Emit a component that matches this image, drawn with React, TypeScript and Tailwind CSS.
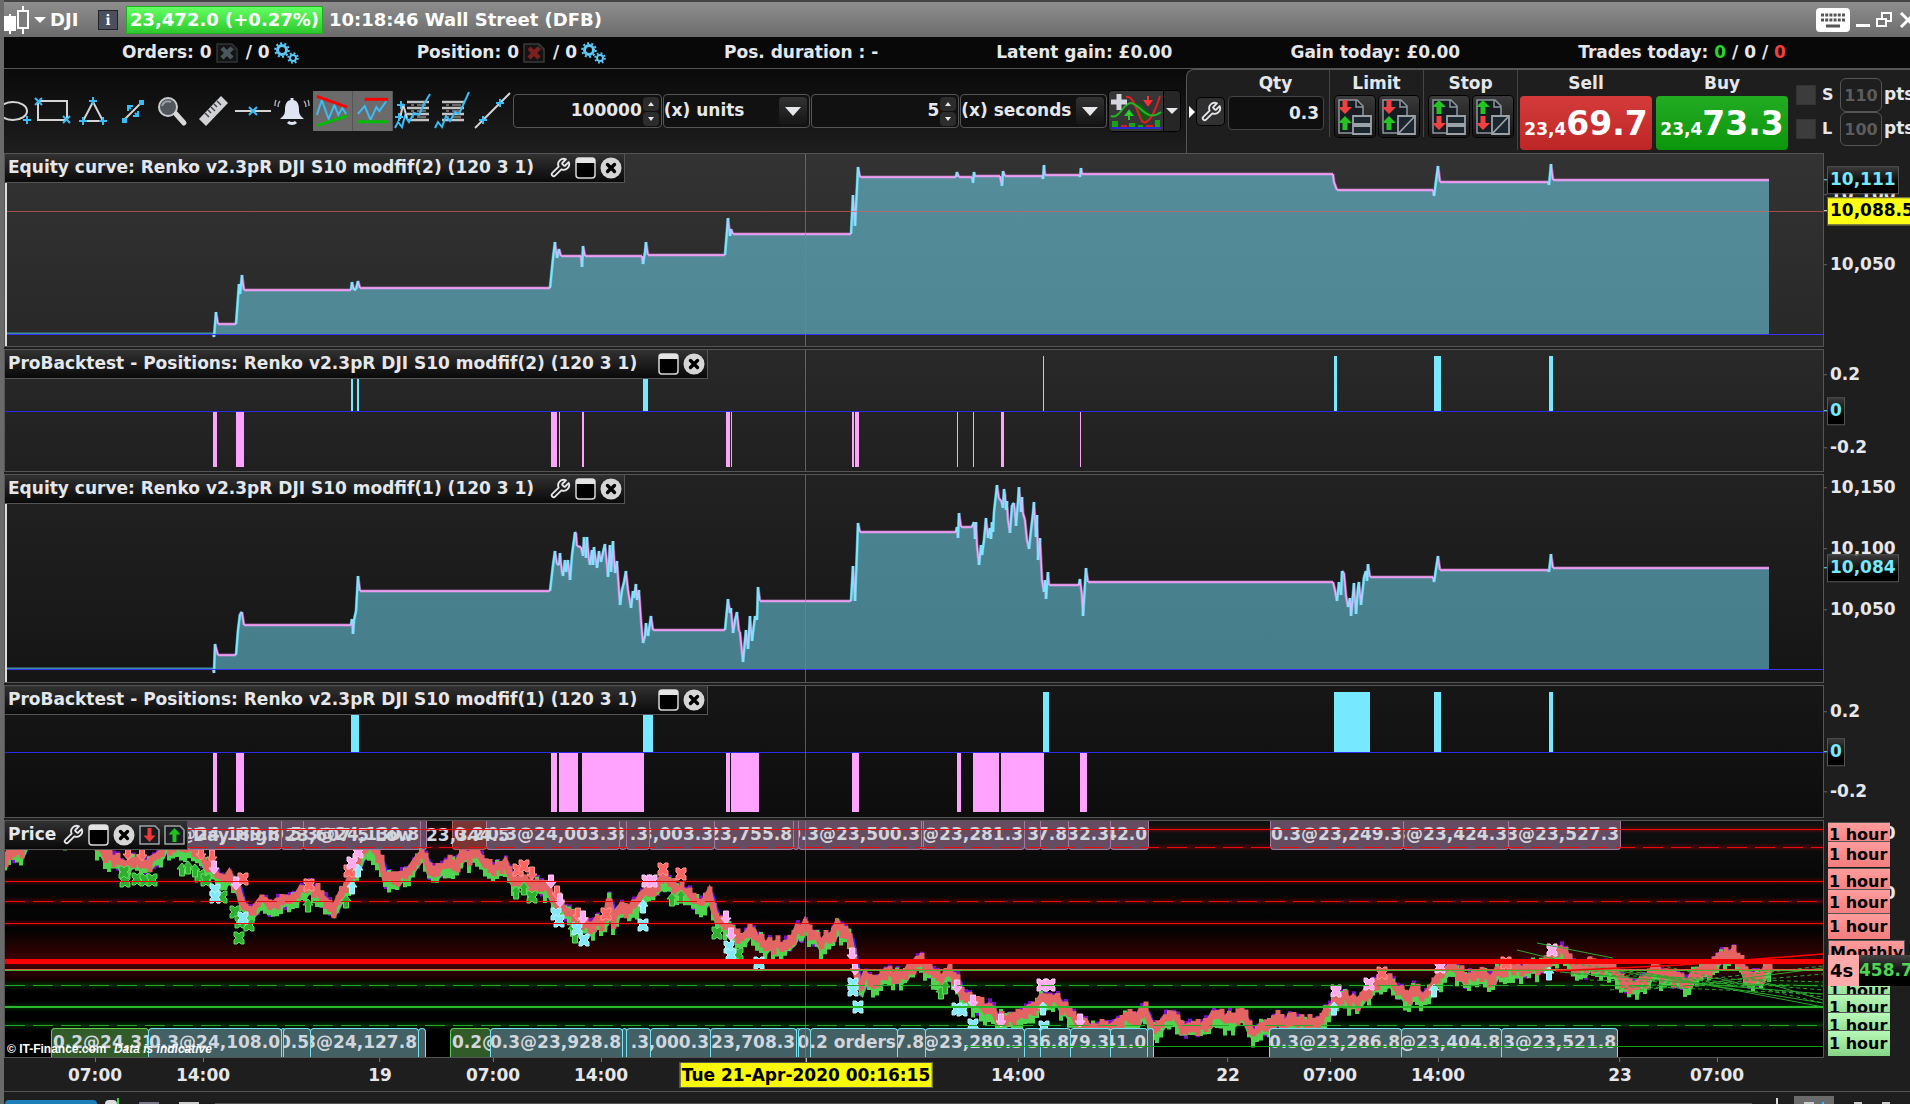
import React, { useState } from 'react';
import { LuWrench } from 'react-icons/lu';

type Pt = [number, number];

const CYAN = '#76e8ff';
const PINK = '#ffa3ff';
const X0 = 5;
const PLOT_W = 1818;

// "x,y x,y ..." -> points
const pts = (s: string): Pt[] => s.trim().split(/\s+/).map((p) => p.split(',').map(Number) as Pt);

const equity2 = pts(`5,334 213,334 214,337 216,312 218,324 236,324 239,284 240,294 242,275 244,290 351,290 352,282 354,290
356,289 358,281 360,288 550,288 553,258 555,242 557,258 559,249 561,256 581,256 582,267 583,246 585,256 642,256 643,264
645,252 646,242 648,255 725,255 728,218 730,236 731,229 733,234 851,234 853,195 855,226 858,167 860,177 956,177 957,172
959,177 972,177 973,183 974,172 975,176 1000,176 1002,186 1003,171 1005,176 1042,176 1043,179 1044,165 1045,175 1079,175
1080,177 1081,168 1082,174 1333,174 1334,182 1337,190 1433,190 1434,196 1438,166 1440,182 1548,182 1549,185 1551,164
1553,180 1769,180`);

const equity1 = pts(`5,669 213,669 214,673 215,644 218,655 236,655 238,630 240,614 242,612 244,625 351,625 352,619 353,634
354,620 356,611 358,576 360,591 550,591 553,565 555,551 557,564 559,565 560,553 562,572 563,576 565,560 566,572 568,560
570,580 572,555 574,540 575,532 576,533 577,546 581,547 583,556 584,537 586,558 587,537 589,560 590,565 592,550 593,565
594,547 597,568 599,551 601,562 603,552 605,544 607,565 608,577 610,545 611,572 613,541 615,573 617,561 619,590 620,605
622,590 624,582 626,571 628,590 631,608 633,591 634,598 636,584 637,600 639,590 641,620 643,643 645,636 646,623 648,636
651,616 653,630 725,630 728,599 730,613 731,608 733,633 735,620 737,612 739,631 740,632 743,662 745,640 746,630 748,649
750,616 752,641 755,616 757,620 758,587 760,601 851,601 853,566 855,601 857,550 858,523 860,532 956,532 957,527 958,538
959,513 961,527 972,527 974,522 975,539 976,522 977,545 979,565 981,545 982,555 984,540 986,518 988,538 990,528 991,539
992,522 993,532 994,512 997,485 999,499 1001,500 1003,508 1004,489 1005,494 1006,510 1007,501 1008,520 1010,533 1012,505
1014,503 1015,512 1016,526 1018,501 1019,487 1021,512 1022,497 1023,513 1025,520 1027,540 1029,549 1031,530 1033,513
1034,502 1036,537 1037,515 1038,560 1040,538 1042,580 1044,592 1045,580 1046,599 1048,572 1049,585 1079,585 1080,579
1082,595 1083,616 1086,568 1088,582 1333,582 1335,590 1337,601 1339,582 1341,595 1342,571 1344,573 1346,595 1348,607
1350,598 1351,616 1353,594 1354,583 1356,614 1358,587 1359,582 1361,605 1364,577 1366,571 1367,581 1368,564 1370,577
1433,577 1434,582 1438,556 1440,570 1548,570 1549,572 1551,554 1553,568 1769,568`);

// [from, to] spans along x
const long2: Pt[] = [[351, 353], [357, 359], [643, 648], [1043, 1044], [1334, 1337], [1434, 1441], [1549, 1553]];
const short2: Pt[] = [[213, 217], [236, 244], [551, 557], [559, 560], [582, 584], [726, 730], [731, 732], [852, 854], [855, 859], [957, 958], [973, 974], [1001, 1004], [1080, 1081]];
const long1: Pt[] = [[351, 359], [643, 653], [1043, 1049], [1334, 1370], [1434, 1441], [1549, 1553]];
const short1: Pt[] = [[213, 217], [236, 244], [551, 557], [559, 578], [582, 644], [726, 730], [731, 759], [852, 859], [957, 961], [973, 999], [1001, 1044], [1080, 1087]];

const price = pts(`5,864 12,850 20,852 25,842 30,835 90,835 100,850 108,860 118,862 125,868 135,862 145,866 155,858 165,848
175,845 185,850 195,853 205,862 212,870 220,880 228,878 236,882 240,900 246,908 252,912 262,902 270,908 280,904 290,902
300,893 310,887 318,897 326,902 332,910 340,895 350,880 360,858 370,848 378,855 385,880 395,882 405,876 415,862 420,850
428,868 436,874 445,866 455,862 465,857 475,853 485,864 495,870 505,866 512,880 520,878 530,886 540,884 548,886 555,905
565,910 575,915 585,928 595,924 605,922 609,900 612,925 620,910 628,910 636,905 645,890 655,893 660,882 668,882 676,893
684,892 690,897 700,905 708,895 714,910 720,925 730,930 738,938 745,935 752,930 758,940 765,945 775,945 785,947 790,945
797,932 805,928 815,938 822,945 830,935 838,927 845,935 852,945 856,975 858,990 865,978 875,983 885,976 895,978 905,975
912,966 922,962 930,972 940,978 948,975 955,978 960,992 970,998 980,1008 990,1012 998,1020 1010,1022 1020,1020 1030,1008
1035,1005 1045,998 1055,1000 1065,1010 1075,1022 1090,1028 1105,1028 1115,1025 1125,1018 1135,1020 1145,1010 1150,1025
1160,1030 1170,1015 1180,1025 1190,1028 1200,1030 1210,1020 1215,1014 1225,1020 1235,1018 1242,1012 1250,1035 1260,1030
1270,1022 1280,1021 1295,1022 1310,1022 1322,1024 1328,1010 1335,1003 1345,998 1355,1003 1362,1000 1370,990 1380,980
1390,985 1400,993 1408,998 1415,990 1425,998 1435,985 1440,975 1450,968 1460,976 1470,980 1480,976 1490,982 1500,970
1508,972 1520,972 1530,968 1540,965 1548,960 1555,953 1568,955 1575,968 1585,970 1595,965 1605,967 1615,975 1625,985
1633,988 1645,982 1655,968 1665,978 1680,985 1690,980 1700,970 1715,965 1722,955 1730,953 1740,962 1748,978 1758,980
1765,973 1769,968`);

const noise = (n: number) => {
  const v = Math.sin(n * 12.9898) * 43758.5453;
  return v - Math.floor(v);
};

// resample the price every 4px, with some wobble
const ticks: Pt[] = [];
for (let x = 5, i = 0, n = 0; x <= 1769; x += 4, n++) {
  while (i < price.length - 2 && price[i + 1][0] < x) i++;
  const [ax, ay] = price[i];
  const [bx, by] = price[i + 1];
  ticks.push([x, ay + ((by - ay) * (x - ax)) / (bx - ax) + (noise(n * 3.1) - 0.5) * 7]);
}

const barsPath = (seed: number, top: number, bottom: number, spread: number, dx = 0) =>
  ticks
    .map(([x, y], i) => {
      const a = y + top - noise(i + seed) * spread;
      const b = y + bottom + noise(i * 1.7 + seed) * spread;
      return `M${x + dx} ${a.toFixed(1)}V${b.toFixed(1)}`;
    })
    .join('');

const linePath = (dy: number, dx = 0) =>
  'M' + ticks.map(([x, y]) => `${x + dx} ${(y + dy).toFixed(1)}`).join('L');

type Marker = { kind: 'x' | 'up' | 'down'; fill: string; edge: string; at: Pt[] };
const GREEN_M = '#2fae2f';
const RED_M = '#ff6464';
const markers: Marker[] = [
  { kind: 'x', fill: GREEN_M, edge: '#5fe05f', at: pts('125,881 137,879 145,880 152,880 124,872 200,876 206,880 222,897 235,912 240,922 249,925 239,938 532,897 717,933 738,954') },
  { kind: 'up', fill: GREEN_M, edge: '#5fe05f', at: pts('182,870 188,868 195,871 308,906 346,902 516,893 524,889 573,930 575,937 672,900 681,897 941,993 945,988') },
  { kind: 'x', fill: RED_M, edge: '#ff9a8a', at: pts('309,885 243,879 349,871 518,870 524,866 606,914 663,869 681,874 1382,973 1506,963') },
  { kind: 'down', fill: RED_M, edge: '#ff9a8a', at: pts('128,853 142,854 201,853 212,856 532,873 557,892 578,914') },
  { kind: 'x', fill: '#86e8f7', edge: '#b8f4ff', at: pts('215,890 215,897 243,918 556,914 559,921 577,929 584,940 643,925 729,947 731,955 759,963 853,984 853,990 858,1007 957,1009 962,1010 973,1025 1044,1027') },
  { kind: 'up', fill: '#86f0ff', edge: '#b8f4ff', at: pts('352,888 358,871 643,907 1043,1009 1334,1009 1434,991 1549,974') },
  { kind: 'down', fill: '#ffa8f4', edge: '#ffd0fa', at: pts('214,867 236,883 551,881 560,900 583,917 726,917 731,934 852,954 855,968 957,986 973,1001 1001,1020 1080,1020') },
  { kind: 'x', fill: '#ffabec', edge: '#ffd0fa', at: pts('352,863 358,852 647,881 652,881 1042,985 1050,985 1336,991 1369,984 1440,967 1552,950') },
];

type Tag = { from: number; to: number; text?: string; tone: 'sell' | 'buy' | 'green' | 'red' };
const sell = (from: number, to: number, text?: string): Tag => ({ from, to, text, tone: 'sell' });
const buy = (from: number, to: number, text?: string): Tag => ({ from, to, text, tone: 'buy' });

const topTags: Tag[] = [
  sell(187, 281, '@24,189.8'), sell(281, 303, '0.5'), sell(303, 420, '3@24,130.8'), sell(420, 426),
  { from: 452, to: 486, text: '0.2@24', tone: 'red' },
  sell(486, 619, '0.3@24,003.3'), sell(619, 626, '3'), sell(626, 649, '.3'), sell(649, 714, '23,003.3'),
  sell(714, 793, '23,755.8'), sell(793, 798), sell(798, 921, '0.3@23,500.3'), sell(921, 923),
  sell(923, 1024, '0.3@23,281.3'), sell(1024, 1040, '3'), sell(1040, 1068, '7.8'), sell(1068, 1110, '32.3'),
  sell(1110, 1148, '42.0'), sell(1270, 1403, '0.3@23,249.3'), sell(1403, 1508, '0.3@23,424.3'), sell(1508, 1620, '0.3@23,527.3'),
];

const bottomTags: Tag[] = [
  { from: 51, to: 148, text: '0.2@24,310', tone: 'green' },
  buy(148, 281, '0.3@24,108.0'), buy(281, 283), buy(283, 310, '0.5'), buy(310, 418, '3@24,127.8'), buy(418, 425),
  { from: 450, to: 490, text: '0.2@24', tone: 'green' },
  buy(490, 622, '0.3@23,928.8'), buy(622, 626), buy(626, 650, '.3'), buy(650, 710, '24,000.3'), buy(710, 796, '23,708.3'),
  buy(796, 798), buy(798, 810, '0'), buy(810, 897, '0.2 orders'), buy(897, 925, '7.8'), buy(925, 1024, '@23,280.3'),
  buy(1024, 1040, '3'), buy(1040, 1070, '6.8'), buy(1070, 1110, '79.3'), buy(1110, 1147, '41.0'), buy(1147, 1153),
  buy(1269, 1401, '0.3@23,286.8'), buy(1401, 1501, '@23,404.8'), buy(1501, 1617, '3@23,521.8'),
];

const toneClass = {
  sell: 'justify-end border-[#a97aa0] bg-[#664c60] rounded-b-sm border-x border-b',
  red: 'justify-start border-[#c06060] bg-[#7a3434] rounded-b-sm border-x border-b',
  buy: 'justify-end border-[#74e4f5] bg-[#436064] rounded-t-sm border-x border-t',
  green: 'justify-start border-[#5fd04f] bg-[#315c2a] rounded-t-sm border-x border-t',
};

const timeLabels: [number, string][] = [
  [95, '07:00'], [203, '14:00'], [380, '19'], [493, '07:00'], [601, '14:00'], [1018, '14:00'],
  [1228, '22'], [1330, '07:00'], [1438, '14:00'], [1620, '23'], [1717, '07:00'],
];

const left = (x: number) => `${((x - X0) / PLOT_W) * 100}%`;

/* ---------- small icons ---------- */

const CrossDot = ({ x, y }: { x: number; y: number }) => (
  <path d={`M${x - 4} ${y}h8M${x} ${y - 4}v8`} stroke="#38bdf8" strokeWidth="2" />
);

function Gears() {
  return (
    <svg width="25" height="22" viewBox="0 0 25 22" fill="none" stroke="#5cc8f5">
      <circle cx="8" cy="8" r="4.5" strokeWidth="3" />
      <circle cx="8" cy="8" r="6.8" strokeWidth="2" strokeDasharray="2.1 2.17" />
      <circle cx="19" cy="16" r="3" strokeWidth="2" />
      <circle cx="19" cy="16" r="4.8" strokeWidth="2" strokeDasharray="1.8 1.97" />
    </svg>
  );
}

function CancelDoc({ color, line }: { color: string; line: string }) {
  return (
    <svg width="22" height="20" viewBox="0 0 22 20" fill="none">
      <path d="M1 1h15l5 5v13H1z" fill="#141414" stroke={line} strokeWidth="1.5" />
      <path d="M16 1v5h5" stroke={line} />
      <path d="M6 5l10 10M16 5L6 15" stroke={color} strokeWidth="4.5" />
    </svg>
  );
}

function WindowIcon() {
  return (
    <svg width="21" height="22" viewBox="0 0 21 22">
      <rect x="1" y="1" width="19" height="20" rx="3" fill="#000" stroke="#d8d8d8" strokeWidth="1.5" />
      <path d="M1 6V4a3 3 0 0 1 3-3h13a3 3 0 0 1 3 3v2z" fill="#e4e4e4" />
    </svg>
  );
}

function CloseIcon() {
  return (
    <svg width="22" height="22" viewBox="0 0 22 22">
      <circle cx="11" cy="11" r="10.5" fill="#d6d6d6" />
      <path d="M7.5 7.5l7 7M14.5 7.5l-7 7" stroke="#000" strokeWidth="3.4" strokeLinecap="round" />
    </svg>
  );
}

function DocArrow({ up }: { up?: boolean }) {
  return (
    <svg width="21" height="20" viewBox="0 0 21 20" fill="none">
      <path d="M1 1h15l4 4v14H1z" fill="#181c20" stroke="#a0a4a8" strokeWidth="1.5" />
      {up ? (
        <path d="M10.5 3l6 6.500h-4V17h-4V9.500h-4z" fill="#1fc41f" />
      ) : (
        <path d="M10.500 17l6-6.500h-4V3h-4v7.500h-4z" fill="#f03a3a" />
      )}
    </svg>
  );
}

function OrderIcon({ topUp, slash }: { topUp?: boolean; slash?: boolean }) {
  return (
    <svg width="37" height="38" viewBox="0 0 37 38" fill="none">
      <path d="M3 2h18l6 6v27H3z" fill="#161c22" stroke="#8f979e" strokeWidth="1.5" />
      <path d="M20 2v7h7" stroke="#8f979e" strokeWidth="1.5" />
      {topUp ? (
        <path d="M9 2l7 7h-4.500V16h-5V9H2z" fill="#22c322" />
      ) : (
        <path d="M9 16l7-7h-4.500V2h-5V9H2z" fill="#f04040" />
      )}
      {topUp ? (
        <path d="M9 32l7-7h-4.500V18h-5v7H2z" fill="#f04040" />
      ) : (
        <path d="M9 18l7 7h-4.500V32h-5v-7H2z" fill="#22c322" />
      )}
      {slash ? (
        <path d="M18 18h17v18H18zM18 36L35 18" fill="#1c262e" stroke="#9aa2a8" strokeWidth="1.8" />
      ) : (
        <path d="M17 18h18v8H17zM17 28h18v8H17z" fill="#1c262e" stroke="#9aa2a8" strokeWidth="1.8" />
      )}
    </svg>
  );
}

const drawTools: { label: string; active?: boolean; icon: React.ReactNode }[] = [
  {
    label: 'Rectangle',
    icon: (
      <>
        <rect x="5" y="10" width="29" height="19" stroke="#d4d4d4" strokeWidth="2" />
        <path d="M2 7l7 7M9 7l-7 7M30 25l7 7M37 25l-7 7" stroke="#38bdf8" strokeWidth="2" />
      </>
    ),
  },
  {
    label: 'Triangle',
    icon: (
      <>
        <path d="M20 11L10 30h20z" stroke="#d4d4d4" strokeWidth="2" />
        <CrossDot x={20} y={10} />
        <CrossDot x={10} y={30} />
        <CrossDot x={30} y={30} />
      </>
    ),
  },
  {
    label: 'Segment',
    icon: (
      <>
        <path d="M12 28L28 12" stroke="#d4d4d4" strokeWidth="2" />
        <path d="M9 27h5v5h-5zM26 9h5v5h-5z" fill="#38bdf8" />
        <path d="M15 20v-5h5M25 20v5h-5M15 15l3 3M25 25l-3-3" stroke="#38bdf8" strokeWidth="2" />
      </>
    ),
  },
  {
    label: 'Zoom',
    icon: (
      <>
        <circle cx="15" cy="16" r="9" fill="#50565c" stroke="#c9cdd1" strokeWidth="2" />
        <path d="M9 15c1-4 5-6 9-4" stroke="#9aa0a6" strokeWidth="2" />
        <path d="M23 23l8 9" stroke="#d8d8d8" strokeWidth="5" strokeLinecap="round" />
      </>
    ),
  },
  {
    label: 'Ruler',
    icon: (
      <>
        <path d="M28 5l7 7L13 35l-7-7z" fill="#d0d2d6" />
        <path d="M12 22l4 4M15 19l3 3M18 16l4 4M21 13l3 3M24 10l4 4" stroke="#44484c" strokeWidth="1.500" />
      </>
    ),
  },
  {
    label: 'Horizontal line',
    icon: (
      <>
        <path d="M2 20h36" stroke="#d4d4d4" strokeWidth="2" />
        <path d="M16 16l8 8M24 16l-8 8" stroke="#38bdf8" strokeWidth="2" />
      </>
    ),
  },
  {
    label: 'Alert',
    icon: (
      <>
        <path d="M19 9c-6 0-7 5-7 10 0 5-2 6-5 9h24c-3-3-5-4-5-9 0-5-1-10-7-10z" fill="#dfe5f2" />
        <path d="M19 7v3M15 31c2 2 6 2 8 0" stroke="#dfe5f2" strokeWidth="3" />
        <path d="M7 10c-2 2-2 4-2 6M3 9c-1 2-1 4-1 6M31 10c2 2 2 4 2 6M35 9c1 2 1 4 1 6" stroke="#a8adb8" strokeWidth="1.500" />
      </>
    ),
  },
  {
    label: 'Channel detection',
    active: true,
    icon: (
      <>
        <path d="M4 24l5-15 7 19 6-14 4 10 4-7 4 6" stroke="#38bdf8" strokeWidth="2" />
        <path d="M4 5l31 11" stroke="#f00" strokeWidth="3" />
        <path d="M4 35l31-10" stroke="#0b0" strokeWidth="3" />
      </>
    ),
  },
  {
    label: 'Support and resistance',
    active: true,
    icon: (
      <>
        <path d="M5 23l7-8 6 14 6-13 3 4 7-10" stroke="#38bdf8" strokeWidth="2" />
        <path d="M12 8h24" stroke="#f00" strokeWidth="3" />
        <path d="M4 31h32" stroke="#0b0" strokeWidth="3" />
      </>
    ),
  },
  {
    label: 'Pattern list',
    icon: (
      <>
        <path d="M14 11h22M14 17h22M14 23h22M14 29h22" stroke="#c4c4c4" strokeWidth="2.500" />
        <path d="M18 14h3M24 14h9M18 20h3M24 20h9M18 26h3M24 26h9" stroke="#888" strokeWidth="1.500" />
        <path d="M2 37l3-6 4 5 3-11 4 6 5-9 5 2 5-11 6-10" stroke="#38bdf8" strokeWidth="2" />
        <path d="M7 28l3-15 4 14" stroke="#d4d4d4" strokeWidth="2" />
        <CrossDot x={8} y={14} />
        <CrossDot x={6} y={26} />
      </>
    ),
  },
  {
    label: 'Order list',
    icon: (
      <>
        <path d="M9 11h22M9 17h22M9 23h22M9 29h22" stroke="#c4c4c4" strokeWidth="2.500" />
        <path d="M13 14h3M19 14h9M13 20h3M19 20h9M13 26h3M19 26h9" stroke="#888" strokeWidth="1.500" />
        <path d="M2 37l3-6 4 5 4-11 4 5 5-9 4 2 5-11 5-11" stroke="#38bdf8" strokeWidth="2" />
      </>
    ),
  },
  {
    label: 'Trend line',
    icon: (
      <>
        <path d="M2 37L37 2" stroke="#d4d4d4" strokeWidth="2" />
        <CrossDot x={10} y={29} />
        <CrossDot x={27} y={12} />
      </>
    ),
  },
];

/* ---------- header bars ---------- */

function TitleBar() {
  return (
    <header className="flex h-[37px] shrink-0 items-center border-t-2 border-[#444] bg-linear-to-b from-[#8e8e8e] to-[#6c6c6c] text-[18px] text-white">
      <svg width="26" height="28" viewBox="0 0 26 28" fill="none" stroke="#fff" strokeWidth="2">
        <path d="M6 8v20M19 0v28" />
        <rect x="1" y="11" width="10" height="13" fill="#fff" />
        <rect x="14" y="5" width="10" height="17" fill="#7c7c7c" />
      </svg>
      <span className="ml-1 h-0 w-0 border-x-6 border-t-6 border-x-transparent border-t-white" />
      <h1 className="ml-1 w-12">DJI</h1>
      <button aria-label="Info" className="flex h-5 w-5 items-center justify-center border border-[#222] bg-[#4c4f5c] font-serif text-base">
        i
      </button>
      <span className="ml-2 flex h-7 w-[197px] items-center justify-center border border-[#1fae1f] bg-linear-to-b from-[#62ff62] to-[#2cc92c]">
        23,472.0 (+0.27%)
      </span>
      <span className="ml-1.5">10:18:46 Wall Street (DFB)</span>
      <div className="-mr-2 ml-auto flex shrink-0 items-center gap-1.5">
        <button aria-label="Keyboard">
          <svg width="34" height="24" viewBox="0 0 34 24">
            <rect width="34" height="24" rx="4" fill="#fff" />
            <path d="M5 7h24M5 12h24" stroke="#555" strokeWidth="3" strokeDasharray="3 1.200" />
            <path d="M10 18h14" stroke="#555" strokeWidth="3" />
          </svg>
        </button>
        <button aria-label="Minimize" className="mt-3 h-[3px] w-3.5 bg-white" />
        <button aria-label="Restore">
          <svg width="16" height="16" viewBox="0 0 16 16" fill="#777" stroke="#fff" strokeWidth="2">
            <rect x="6" y="1" width="9" height="8" />
            <rect x="1" y="7" width="9" height="7" />
          </svg>
        </button>
        <button aria-label="Close">
          <svg width="20" height="16" viewBox="0 0 20 16" stroke="#fff" strokeWidth="3">
            <path d="M3 1l14 14M17 1L3 15" />
          </svg>
        </button>
      </div>
    </header>
  );
}

function InfoBar() {
  return (
    <div className="flex h-8 shrink-0 items-center justify-evenly border-b border-[#555] bg-[#080808] pt-px pr-1.5 whitespace-nowrap">
      <div className="flex items-center gap-1">
        Orders: 0 <CancelDoc color="#4c565e" line="#2c343a" /> <span className="ml-1">/ 0</span> <Gears />
      </div>
      <div className="flex items-center gap-1">
        Position: 0 <CancelDoc color="#7c2020" line="#3a3a3a" /> <span className="ml-1">/ 0</span> <Gears />
      </div>
      <div>Pos. duration : -</div>
      <div>Latent gain: £0.00</div>
      <div>Gain today: £0.00</div>
      <div>
        Trades today: <span className="text-[#2bd32b]">0</span> / 0 / <span className="text-[#f24040]">0</span>
      </div>
    </div>
  );
}

function Stepper({ label, value, onChange }: { label: string; value: number; onChange: (v: number) => void }) {
  return (
    <div className="flex h-[34px] flex-1 items-center rounded border border-[#555] bg-[#111] pr-0.5">
      <input
        aria-label={label}
        className="w-0 flex-1 bg-transparent pr-px text-right outline-none"
        value={value}
        onChange={(e) => onChange(Number(e.target.value) || 0)}
      />
      <div className="flex flex-col gap-px">
        <button aria-label={`${label} up`} onClick={() => onChange(value + 1)} className="flex h-3.5 w-4 items-center justify-center rounded-sm bg-[#2c2c2c]">
          <span className="border-x-3 border-b-4 border-x-transparent border-b-gray-200" />
        </button>
        <button aria-label={`${label} down`} onClick={() => onChange(value - 1)} className="flex h-3.5 w-4 items-center justify-center rounded-sm bg-[#2c2c2c]">
          <span className="border-x-3 border-t-4 border-x-transparent border-t-gray-200" />
        </button>
      </div>
    </div>
  );
}

function Picker({ label, options }: { label: string; options: string[] }) {
  return (
    <div className="relative h-[34px] flex-1 rounded border border-[#555] bg-[#111]">
      <select aria-label={label} className="h-full w-full appearance-none bg-transparent outline-none">
        {options.map((o) => (
          <option key={o}>{o}</option>
        ))}
      </select>
      <span className="pointer-events-none absolute top-0.5 right-0.5 flex h-7 w-7 items-center justify-center rounded bg-linear-to-b from-[#333] to-[#151515]">
        <span className="border-x-8 border-t-9 border-x-transparent border-t-gray-200" />
      </span>
    </div>
  );
}

function OrderGroup({ title, stop }: { title: string; stop?: boolean }) {
  return (
    <div className="flex w-[94px] shrink-0 flex-col items-center border-l border-[#444]">
      <span className="leading-[26px]">{title}</span>
      <div className="flex gap-1">
        {[false, true].map((slash) => (
          <button key={String(slash)} aria-label={`${title} ${slash ? 'custom' : 'order'}`} className="flex h-[41px] w-10 items-center justify-center rounded bg-linear-to-b from-[#3a3a3a] to-[#161616] ring-1 ring-black">
            <OrderIcon topUp={stop} slash={slash} />
          </button>
        ))}
      </div>
    </div>
  );
}

function DealButton({ side, big, className }: { side: string; big: string; className: string }) {
  return (
    <div className="flex w-[132px] shrink-0 flex-col items-center">
      <span className="leading-[26px]">{side}</span>
      <button aria-label={`${side} at 23,4${big}`} className={`flex h-[54px] w-full items-baseline justify-center rounded pt-2 text-white ${className}`}>
        <span>23,4</span>
        <span className="text-[33px] leading-10">{big}</span>
      </button>
    </div>
  );
}

function RiskRow({ id, value }: { id: string; value: string }) {
  return (
    <div className="flex h-[34px] items-center gap-1.5">
      <input type="checkbox" aria-label={`Enable ${id}`} className="h-5 w-5 appearance-none border border-[#333] bg-[#3c3c3c]" />
      <label htmlFor={`risk-${id}`} className="w-3 text-base">{id}</label>
      <input id={`risk-${id}`} defaultValue={value} className="h-full w-[42px] rounded-md border border-[#555] bg-transparent text-center text-base text-[#5c5c5c] outline-none" />
      <span className="-ml-1">pts</span>
    </div>
  );
}

function Toolbar() {
  const [units, setUnits] = useState(100000);
  const [period, setPeriod] = useState(5);

  return (
    <div className="flex h-[84px] shrink-0 overflow-hidden bg-linear-to-b from-[#0a0a0a] to-[#1e1e1e]">
      <div className="flex min-w-0 flex-1 items-center">
        <button aria-label="Ellipse" className="w-[29px] shrink-0">
          <svg width="29" height="40" viewBox="0 0 29 40" fill="none">
            <ellipse cx="9" cy="20" rx="14" ry="9" stroke="#d4d4d4" strokeWidth="2" />
            <CrossDot x={23} y={29} />
          </svg>
        </button>
        {drawTools.map((t) => (
          <button key={t.label} aria-label={t.label} className={`h-10 w-10 shrink-0 ${t.active ? 'border-r border-[#555] bg-[#6b6b6b]' : ''}`}>
            <svg viewBox="0 0 40 40" className="h-full w-full" fill="none">
              {t.icon}
            </svg>
          </button>
        ))}
        <div className="flex min-w-0 flex-1 gap-px">
          <Stepper label="Unit count" value={units} onChange={setUnits} />
          <Picker label="Units" options={['(x) units', '(x) days']} />
          <Stepper label="Period" value={period} onChange={setPeriod} />
          <Picker label="Timeframe" options={['(x) seconds', '(x) minutes']} />
        </div>
        <div className="ml-0.5 flex h-10 shrink-0 overflow-hidden rounded bg-[#2a2a2a] ring-1 ring-black">
          <button aria-label="Indicators">
            <svg width="54" height="40" viewBox="0 0 54 40" fill="none">
              <rect width="54" height="40" fill="#363636" />
              <path d="M24 12l10 19 8-7-10-11z" fill="#0c5c0c" />
              <path d="M17 6c8-2 12 18 16 24 5 6 13-8 18-25" stroke="#e02020" strokeWidth="2" />
              <path d="M2 25c8 4 12-13 20-13 10 2 16 20 30 9" stroke="#22b422" strokeWidth="2" />
              <path d="M10 3v16M2 11h16" stroke="#d5d5e0" strokeWidth="5" />
              <path d="M39 5v7M36 10l3 4 3-4z" fill="#f33" stroke="#f33" strokeWidth="2" />
              <path d="M20 29v-6M17 24l3-4 3 4z" fill="#3f3" stroke="#2c2" strokeWidth="2" />
              <path d="M3 30h6v6H3zM20 32h6v5h-6zM29 34h5v3h-5zM46 29h5v8h-5z" fill="#18a018" />
              <path d="M12 34h6v3h-6zM37 34h7v3h-7z" fill="#d02020" />
              <path d="M3 37h49" stroke="#2a2ad0" strokeWidth="2" />
            </svg>
          </button>
          <button aria-label="More indicators" className="flex w-[17px] items-center justify-center border-l border-black bg-[#262626]">
            <span className="border-x-6 border-t-6 border-x-transparent border-t-gray-200" />
          </button>
        </div>
      </div>

      <div className="ml-1.5 flex w-[724px] shrink-0 items-start rounded-tl-lg border-t border-l border-[#555] bg-[#1e1e1e]">
        <span className="mt-9 ml-0.5 border-y-6 border-l-6 border-y-transparent border-l-white" />
        <button aria-label="Order settings" className="mt-7 ml-0.5 flex h-[27px] w-[27px] shrink-0 items-center justify-center rounded bg-[#303030] ring-1 ring-black">
          <LuWrench size={22} className="text-gray-200" />
        </button>
        <div className="ml-1 flex w-[101px] shrink-0 flex-col">
          <label htmlFor="qty" className="pr-1.5 text-center leading-[26px]">Qty</label>
          <input id="qty" defaultValue="0.3" className="h-[34px] w-[96px] rounded border border-[#444] bg-[#0f0f0f] pr-1 text-right outline-none" />
        </div>
        <OrderGroup title="Limit" />
        <OrderGroup title="Stop" stop />
        <div className="flex shrink-0 gap-1 border-l border-[#444] pl-0.5">
          <DealButton side="Sell" big="69.7" className="bg-linear-to-b from-[#d43a3a] to-[#be2626]" />
          <DealButton side="Buy" big="73.3" className="bg-linear-to-b from-[#22ac22] to-[#0a960a]" />
        </div>
        <div className="mt-2 ml-2 shrink-0">
          <RiskRow id="S" value="110" />
          <RiskRow id="L" value="100" />
        </div>
      </div>
    </div>
  );
}

/* ---------- chart panels ---------- */

type AxisLabel = { y: number; text: string; boxed?: boolean; cursor?: boolean };

type PanelProps = {
  top: number;
  height: number;
  title: string;
  bg: string;
  labels: AxisLabel[];
  wide: string;
  settings?: boolean;
  leftBar?: boolean;
  children: React.ReactNode;
};

function PanelHeader({ title, wide, settings, trade }: { title: string; wide: string; settings?: boolean; trade?: boolean }) {
  return (
    <div className={`absolute top-0 left-0 flex h-[29px] items-center gap-1 border-r border-b border-[#555] bg-linear-to-b from-[#323232] to-[#0a0a0a] pr-0.5 pl-[3px] ${wide}`}>
      <h2 className="grow whitespace-nowrap">{title}</h2>
      {settings && (
        <button aria-label="Settings">
          <LuWrench size={22} className="text-gray-200" />
        </button>
      )}
      <button aria-label="Maximize"><WindowIcon /></button>
      <button aria-label="Close panel"><CloseIcon /></button>
      {trade && (
        <>
          <button aria-label="Sell marker"><DocArrow /></button>
          <button aria-label="Buy marker"><DocArrow up /></button>
        </>
      )}
    </div>
  );
}

function Axis({ top, height, labels }: { top: number; height: number; labels: AxisLabel[] }) {
  return (
    <div className="relative w-[86px] shrink-0 overflow-hidden">
      {labels.map((l) => (
        <div key={l.text + l.y} className="absolute left-0 flex -translate-y-1/2 items-center" style={{ top: `${((l.y - top) / height) * 100}%` }}>
          <span className={`h-px w-[3px] ${l.boxed ? 'bg-[#76e8ff]' : l.cursor ? 'bg-white' : 'bg-[#666]'}`} />
          {l.boxed && (
            <span className="border border-[#555] bg-linear-to-b from-[#3a3a3a] to-black px-0.5 text-[#76e8ff]">{l.text}</span>
          )}
          {l.cursor && (
            <span className="border border-[#555] bg-[#ffff14] pl-0.5 text-black">{l.text}</span>
          )}
          {!l.boxed && !l.cursor && <span className="pl-[3px]">{l.text}</span>}
        </div>
      ))}
    </div>
  );
}

function Panel({ top, height, title, bg, labels, wide, settings, leftBar, children }: PanelProps) {
  return (
    <section className="flex min-h-0">
      <div className={`relative min-w-0 flex-1 border border-[#555] bg-linear-to-b ${bg}`}>
        <svg className="block h-full w-full" viewBox={`${X0} ${top + 1} ${PLOT_W} ${height - 2}`} preserveAspectRatio="none">
          {children}
          {leftBar && <path d={`M6 ${top}V${top + height}`} stroke="#ddd" strokeWidth="2" />}
          <path d={`M805.500 ${top}V${top + height}`} stroke="#e05a5a" strokeOpacity="0.65" />
        </svg>
        <PanelHeader title={title} wide={wide} settings={settings} />
      </div>
      <Axis top={top} height={height} labels={labels} />
    </section>
  );
}

function EquityCurve({ data, base }: { data: Pt[]; base: number }) {
  let up = '';
  let flat = '';
  for (let i = 2; i < data.length; i++) {
    const seg = `M${data[i - 1].join(' ')}L${data[i].join(' ')}`;
    if (data[i][1] < data[i - 1][1]) up += seg;
    else flat += seg;
  }
  const area = `M${data.map((p) => p.join(' ')).join('L')}V${base}H5z`;
  return (
    <g fill="none">
      <path d={area} fill={CYAN} fillOpacity="0.5" />
      <path d={`M5 ${base - 0.5}H213`} stroke="#3f8fa0" strokeWidth="2" />
      <path d={flat} stroke={PINK} strokeWidth="3" strokeOpacity="0.45" />
      <path d={up} stroke={CYAN} strokeWidth="3" strokeOpacity="0.5" />
      <path d={flat} stroke={PINK} strokeWidth="1.5" />
      <path d={up} stroke={CYAN} strokeWidth="2" />
      <path d={`M5 ${base}.500H1823`} stroke="#3434f0" />
    </g>
  );
}

function PositionBars({ longs, shorts, zero, hi, lo }: { longs: Pt[]; shorts: Pt[]; zero: number; hi: number; lo: number }) {
  return (
    <g>
      {longs.map(([a, b]) => <rect key={a} x={a} y={hi} width={b - a} height={zero - hi} fill={CYAN} />)}
      {shorts.map(([a, b]) => <rect key={a} x={a} y={zero} width={b - a} height={lo - zero} fill={PINK} />)}
      <path d={`M5 ${zero}.500H1823`} stroke="#2c2ce8" />
    </g>
  );
}

const shapes = {
  x: 'M-5 -6h3l2 2l2-2h3v4l-2 2l2 2v4h-3l-2-2l-2 2h-3v-4l2-2l-2-2z',
  up: 'M0 -7l5 6h-2.500v7h-5v-7h-2.500z',
  down: 'M0 7l5-6h-2.500v-7h-5v7h-2.500z',
};

const fan: { d: string; dash?: boolean }[] = [
  { d: 'M1537 943L1613 958' }, { d: 'M1517 950L1558 960' }, { d: 'M1600 968L1823 1003' }, { d: 'M1640 972L1823 1007' },
  { d: 'M1560 972L1823 994' }, { d: 'M1700 984L1823 968' }, { d: 'M1750 978L1823 1000' },
  { d: 'M1560 962L1823 997', dash: true }, { d: 'M1570 974L1823 982', dash: true }, { d: 'M1590 980L1823 986', dash: true },
  { d: 'M1610 990L1823 966', dash: true }, { d: 'M1600 985L1823 994', dash: true }, { d: 'M1640 990L1823 974', dash: true },
  { d: 'M1580 970L1823 990', dash: true }, { d: 'M1660 965L1823 1003', dash: true },
];

function PriceTag({ tag, top }: { tag: Tag; top: boolean }) {
  return (
    <div
      className={`absolute flex items-center overflow-hidden px-px whitespace-nowrap text-gray-300 ${top ? 'top-0 h-[29px]' : 'bottom-0 h-[29px]'} ${toneClass[tag.tone]}`}
      style={{ left: left(tag.from), width: `${((tag.to - tag.from + 1) / PLOT_W) * 100}%` }}
    >
      {tag.text}
    </div>
  );
}

const hourRed = [822, 841, 868, 889, 913];
const hourGreen = [977, 994, 1012, 1030];

function PricePanel() {
  const axisTop = (y: number) => `${((y - 820) / 238) * 100}%`;
  return (
    <section className="flex min-h-0">
      <div className="relative min-w-0 flex-1 overflow-hidden border border-[#555] bg-linear-to-b from-[#101010] to-black">
        <svg className="absolute inset-0 h-full w-full" viewBox="5 821 1818 236" preserveAspectRatio="none" fill="none">
          <defs>
            <linearGradient id="glowRed" x1="0" x2="0" y1="0" y2="1">
              <stop offset="0" stopColor="#a00" stopOpacity="0" />
              <stop offset="0.6" stopColor="#a00" stopOpacity="0.4" />
              <stop offset="1" stopColor="#a00" stopOpacity="0" />
            </linearGradient>
            <linearGradient id="glowGreen" x1="0" x2="0" y1="0" y2="1">
              <stop offset="0" stopColor="#0a0" stopOpacity="0" />
              <stop offset="0.5" stopColor="#0a0" stopOpacity="0.25" />
              <stop offset="1" stopColor="#0a0" stopOpacity="0" />
            </linearGradient>
          </defs>
          <rect x="5" y="930" width="1818" height="56" fill="url(#glowRed)" />
          {[829, 847, 881, 901, 923].map((y) => <rect key={y} x="5" y={y - 4} width="1818" height="8" fill="url(#glowRed)" />)}
          {[985, 1007, 1025].map((y) => <rect key={y} x="5" y={y - 5} width="1818" height="10" fill="url(#glowGreen)" />)}
          <path d={linePath(1, 4)} stroke="#2a2af0" strokeWidth="3" />
          <path d={barsPath(9, -6, 6, 4, 1)} stroke="#7a10c8" strokeWidth="4" />
          <path d={linePath(3, 1)} stroke="#4fd44f" strokeWidth="6" />
          <path d={barsPath(5, 0, 6, 9)} stroke="#4fd44f" strokeWidth="4" />
          <path d={linePath(-2)} stroke="#e46464" strokeWidth="6" />
          <path d={barsPath(11, -2, 0, 8, 1)} stroke="#e46464" strokeWidth="5" />
          {markers.map((m) => m.at.map(([x, y], i) => (
            <path key={m.kind + m.fill + i} d={shapes[m.kind]} transform={`translate(${x} ${y})`} fill={m.fill} stroke={m.edge} />
          )))}
          {fan.map((f) => <path key={f.d} d={f.d} stroke="#2ea82e" strokeDasharray={f.dash ? '4 3' : undefined} />)}
        </svg>

        {topTags.map((t) => <PriceTag key={t.from} tag={t} top />)}
        {bottomTags.map((t) => <PriceTag key={t.from} tag={t} top={false} />)}
        <span className="absolute top-0.5 whitespace-pre text-gray-300" style={{ left: left(193) }}>Day High 23,607.5 Low</span>
        <span className="absolute top-0.5 text-gray-300" style={{ left: left(426) }}>23,344.5</span>
        <small className="absolute bottom-0 left-0.5 font-['Liberation_Sans',sans-serif] text-xs text-white">
          © IT-Finance.com <i className="ml-1">Data is indicative</i>
        </small>

        <svg className="absolute inset-0 h-full w-full" viewBox="5 821 1818 236" preserveAspectRatio="none" fill="none">
          <path d="M187 829.500H1823M5 881.500H1823M5 923.500H1823" stroke="#e80c0c" />
          <path d="M187 847.500H1823M5 901.500H1823" stroke="#e80c0c" strokeDasharray="20 8" />
          <path d="M5 961.500H1823" stroke="#f00" strokeWidth="5" />
          <path d="M5 969.500H1823" stroke="#d86040" />
          <path d="M5 970.500H1823" stroke="#46b432" />
          <path d="M5 985.500H1823M5 1025.500H1823" stroke="#26a826" strokeDasharray="20 8" />
          <path d="M5 1007H1823" stroke="#2cb82c" strokeWidth="2" />
          <path d="M966 1046.500H1823" stroke="#16a016" />
          <path d="M1556 971L1680 965L1823 954" stroke="#f00" strokeWidth="1.5" />
          <path d="M805.500 820V1058" stroke="#e05a5a" strokeOpacity="0.65" />
        </svg>
        <PanelHeader title="Price" wide="w-[183px]" settings trade />
      </div>

      <div className="relative w-[86px] shrink-0 overflow-hidden">
        <span className="absolute left-[6px] -translate-y-1/2" style={{ top: axisTop(834) }}>24,000</span>
        <span className="absolute left-[6px] -translate-y-1/2" style={{ top: axisTop(894) }}>23,800</span>
        {hourRed.map((y) => (
          <span key={y} className="absolute left-[4px] flex h-[26px] w-[62px] items-center border-t border-[#555] bg-linear-to-b from-[#ff9c9c] to-[#f27c7c] pl-px text-base text-black" style={{ top: axisTop(y) }}>
            1 hour
          </span>
        ))}
        <span className="absolute left-[4px] flex h-[26px] w-[77px] items-center border border-[#555] bg-linear-to-b from-[#ff9c9c] to-[#f27c7c] pl-px text-base text-black" style={{ top: axisTop(940) }}>
          Monthly
        </span>
        {hourGreen.map((y) => (
          <span key={y} className="absolute left-[4px] flex h-[26px] w-[62px] items-center border-t border-[#555] bg-linear-to-b from-[#b8f8b8] to-[#86d486] pl-px text-base text-black" style={{ top: axisTop(y) }}>
            1 hour
          </span>
        ))}
        <div className="absolute left-1 flex h-[31px] w-[120px] items-stretch" style={{ top: axisTop(955) }}>
          <span className="flex w-[31px] items-center bg-[#ffaaaa] pl-0.5 text-[18px] text-black">4s</span>
          <span className="flex flex-1 items-center bg-linear-to-b from-[#444] to-black text-[#4fd44f]">458.7</span>
        </div>
      </div>
    </section>
  );
}

function TimeAxis() {
  return (
    <div className="flex h-[34px] shrink-0 border-b border-[#555]">
      <div className="relative ml-px flex-1">
        {timeLabels.map(([x, t]) => (
          <span key={x} className="absolute top-0 flex -translate-x-1/2 flex-col items-center leading-[26px]" style={{ left: left(x) }}>
            <span className="h-1 w-px bg-[#777]" />
            {t}
          </span>
        ))}
        <span className="absolute top-0 flex -translate-x-1/2 flex-col items-center whitespace-nowrap" style={{ left: left(806) }}>
          <span className="h-1 w-px bg-white" />
          <span className="border border-[#555] bg-[#f8f808] px-px leading-6 text-black">Tue 21-Apr-2020 00:16:15</span>
        </span>
      </div>
      <div className="w-[87px] shrink-0" />
    </div>
  );
}

function BottomBar() {
  return (
    <div className="flex h-3 shrink-0 items-end gap-5 overflow-hidden pl-px">
      <div className="h-1 w-[92px] rounded-t-sm bg-[#1d7fb8]" />
      <div className="-ml-3 flex items-end">
        <div className="h-1 w-3 rounded-t-full bg-[#ddd]" />
        <div className="h-1.5 w-0.5 bg-[#3fd43f]" />
      </div>
      <div className="h-0.5 w-5 bg-[#778]" />
      <div className="h-0.5 w-5 bg-[#ccc]" />
      <div className="-ml-1 h-px flex-1 bg-[#555]" />
      <div className="ml-1 h-1.5 w-0.5 bg-[#ddd]" />
      <div className="-ml-1 flex h-2 w-10 items-end justify-center gap-2 bg-[#6b6b6b]">
        <span className="h-0.5 w-2.5 bg-[#ccc]" />
        <span className="h-0.5 w-0.5 bg-[#38bdf8]" />
      </div>
      <div className="h-0.5 w-2 bg-[#ccc]" />
      <div className="mr-5 h-0.5 w-2 bg-[#ccc]" />
    </div>
  );
}

export default function App() {
  return (
    <div className="flex h-screen min-h-[800px] flex-col overflow-hidden border-l-4 border-[#6a6a6a] bg-[#1e1e1e] font-['DejaVu_Sans',sans-serif] text-[17px] font-bold text-gray-200">
      <TitleBar />
      <InfoBar />
      <Toolbar />
      <main className="grid min-h-0 flex-1 grid-rows-[194fr_123fr_209fr_133fr_238fr] gap-y-0.5">
        <Panel
          top={153} height={194} title="Equity curve: Renko v2.3pR DJI S10 modfif(2) (120 3 1)" wide="w-[620px]" settings leftBar
          bg="from-[#333] to-[#282828]"
          labels={[
            { y: 195, text: '10,100' },
            { y: 265, text: '10,050' },
            { y: 180, text: '10,111', boxed: true },
            { y: 211, text: '10,088.5', cursor: true },
          ]}
        >
          <EquityCurve data={equity2} base={334} />
          <path d="M5 211.500H1823" stroke="#e05a5a" strokeOpacity="0.65" />
        </Panel>
        <Panel
          top={349} height={123} title="ProBacktest - Positions: Renko v2.3pR DJI S10 modfif(2) (120 3 1)" wide="w-[703px]"
          bg="from-[#292929] to-[#202020]"
          labels={[{ y: 375, text: '0.2' }, { y: 411, text: '0', boxed: true }, { y: 448, text: '-0.2' }]}
        >
          <PositionBars longs={long2} shorts={short2} zero={411} hi={356} lo={467} />
        </Panel>
        <Panel
          top={474} height={209} title="Equity curve: Renko v2.3pR DJI S10 modfif(1) (120 3 1)" wide="w-[620px]" settings leftBar
          bg="from-[#222] to-[#151515]"
          labels={[{ y: 488, text: '10,150' }, { y: 549, text: '10,100' }, { y: 610, text: '10,050' }, { y: 568, text: '10,084', boxed: true }]}
        >
          <EquityCurve data={equity1} base={669} />
        </Panel>
        <Panel
          top={685} height={133} title="ProBacktest - Positions: Renko v2.3pR DJI S10 modfif(1) (120 3 1)" wide="w-[703px]"
          bg="from-[#171717] to-[#0d0d0d]"
          labels={[{ y: 712, text: '0.2' }, { y: 752, text: '0', boxed: true }, { y: 792, text: '-0.2' }]}
        >
          <PositionBars longs={long1} shorts={short1} zero={752} hi={692} lo={812} />
        </Panel>
        <PricePanel />
      </main>
      <TimeAxis />
      <BottomBar />
    </div>
  );
}
